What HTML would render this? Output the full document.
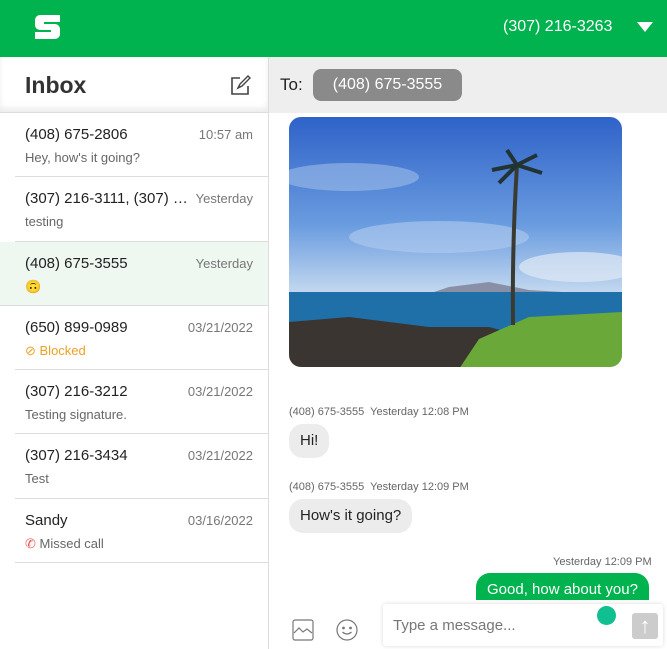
<!DOCTYPE html>
<html><head><meta charset="utf-8"><style>
*{box-sizing:border-box;margin:0;padding:0}
body{width:667px;height:649px;overflow:hidden;font-family:"Liberation Sans",sans-serif;background:#fff;position:relative;color:#222}
.hdr{position:absolute;left:0;top:0;width:667px;height:57px;background:#00b34f}
.logo{position:absolute;left:35px;top:15px;width:25px;height:24px}
.phone{position:absolute;left:503px;top:18px;color:#fff;font-size:16px}
.tri{position:absolute;left:637px;top:22px;width:0;height:0;border-left:8px solid transparent;border-right:8px solid transparent;border-top:10px solid #fff}
.left{position:absolute;left:0;top:57px;width:269px;height:592px;border-right:1px solid #ddd}
.inbox{position:absolute;left:25px;top:15px;font-size:23px;font-weight:bold;color:#333}
.ihd{height:56px;border-bottom:1px solid #ddd;position:relative;box-shadow:0 -4px 6px rgba(0,0,0,.08) inset}
.item{position:relative;height:64.3px;margin-left:15px;border-bottom:1px solid #ddd}
.item.sel{background:#eef7f0;margin-left:0;padding-left:15px}
.n{position:absolute;left:10px;top:13px;font-size:15px;color:#222;width:165px;white-space:nowrap;overflow:hidden;text-overflow:ellipsis}
.sel .n,.sel .s{left:25px}
.d{position:absolute;right:15px;top:14px;font-size:13px;color:#777}
.s{position:absolute;left:10px;top:37px;font-size:13px;color:#666}
.to{position:absolute;left:269px;top:57px;width:398px;height:56px;background:#eee}
.chip{position:absolute;left:44px;top:12px;width:149px;height:32px;border-radius:8px;background:#8a8a8a;color:#fff;font-size:16px;line-height:32px;text-align:center}
.meta{position:absolute;font-size:11px;color:#666}
.b{position:absolute;background:#ececec;border-radius:14px;font-size:15px;color:#222;height:34px;line-height:34px;padding:0 11px}
.g{background:#00b34f;color:#fff}
.inp{position:absolute;left:383px;top:604px;width:280px;height:42px;background:#fff;box-shadow:0 0 4px rgba(0,0,0,.15);border-radius:3px}
</style></head><body>
<div class="hdr"><div class="logo"><svg width="25" height="24"><path d="M5 0h20v7H9v2h11a5 5 0 0 1 5 5v5a5 5 0 0 1-5 5H0v-7h16v-2H5a5 5 0 0 1-5-5V5a5 5 0 0 1 5-5z" fill="#fff"/></svg></div>
<div class="phone">(307) 216-3263</div><div class="tri"></div></div>
<div class="left">
<div class="ihd"><div class="inbox">Inbox</div>
<svg style="position:absolute;left:229px;top:18px" width="22" height="22" viewBox="0 0 22 22" fill="none" stroke="#444" stroke-width="1.6"><path d="M11 3H3v16h16v-8"/><path d="M9 13l2-4 8-8 2 2-8 8z" stroke-width="1.4"/></svg></div>
<div class="item"><div class="n">(408) 675-2806</div><div class="d">10:57 am</div><div class="s">Hey, how's it going?</div></div>
<div class="item"><div class="n">(307) 216-3111, (307) 216</div><div class="d">Yesterday</div><div class="s">testing</div></div>
<div class="item sel"><div class="n">(408) 675-3555</div><div class="d">Yesterday</div><div class="s">🙃</div></div>
<div class="item"><div class="n">(650) 899-0989</div><div class="d">03/21/2022</div><div class="s" style="color:#f0a020">⊘ Blocked</div></div>
<div class="item"><div class="n">(307) 216-3212</div><div class="d">03/21/2022</div><div class="s">Testing signature.</div></div>
<div class="item"><div class="n">(307) 216-3434</div><div class="d">03/21/2022</div><div class="s">Test</div></div>
<div class="item"><div class="n">Sandy</div><div class="d">03/16/2022</div><div class="s"><span style="color:#e55">✆</span> Missed call</div></div>
</div>
<div class="to"><span style="position:absolute;left:11px;top:18px;font-size:17px">To:</span><div class="chip">(408) 675-3555</div></div>
<svg style="position:absolute;left:289px;top:117px" width="333" height="250"><defs><clipPath id="c"><rect width="333" height="250" rx="12"/></clipPath><linearGradient id="sk" x1="0" y1="0" x2="0" y2="1"><stop offset="0" stop-color="#2f62c8"/><stop offset=".6" stop-color="#6a9ce0"/><stop offset="1" stop-color="#c9dcf0"/></linearGradient></defs>
<g clip-path="url(#c)"><rect width="333" height="180" fill="url(#sk)"/>
<ellipse cx="60" cy="60" rx="70" ry="14" fill="#9dbde8" opacity=".6"/><ellipse cx="150" cy="120" rx="90" ry="16" fill="#b0cbee" opacity=".6"/><ellipse cx="290" cy="150" rx="60" ry="15" fill="#e0eaf5" opacity=".7"/>
<path d="M130 180l30-10 40-5 40 8 50 3 43 4z" fill="#8a8fa8"/>
<rect y="175" width="333" height="45" fill="#1f6fa8"/>
<path d="M0 205l60-5 80 10 60 0 30 8 0 40H0z" fill="#3a3530"/>
<path d="M190 222l50-22 93-5v57H170z" fill="#6aa83a"/>
<path d="M228 48q-5 80 -4 160" stroke="#3a3a30" stroke-width="4" fill="none"/>
<path d="M228 48l-25 5M228 48l20-10M228 48l25 8M228 48l-10-15M228 48l-18 18" stroke="#233" stroke-width="4"/>
</g></svg>
<div class="meta" style="left:289px;top:406px">(408) 675-3555&nbsp; Yesterday 12:08 PM</div>
<div class="b" style="left:289px;top:424px">Hi!</div>
<div class="meta" style="left:289px;top:481px">(408) 675-3555&nbsp; Yesterday 12:09 PM</div>
<div class="b" style="left:289px;top:499px">How's it going?</div>
<div class="meta" style="left:553px;top:556px">Yesterday 12:09 PM</div>
<div class="b g" style="left:476px;top:573px;height:30px;border-radius:14px 14px 0 0">Good, how about you?</div>
<div style="position:absolute;left:270px;top:600px;width:397px;height:49px;background:#fff"></div>
<svg style="position:absolute;left:292px;top:619px" width="22" height="22" fill="none" stroke="#777" stroke-width="1.2"><rect x="1" y="1" width="20" height="20" rx="2"/><path d="M2 14l5-5 4 4 4-3 5 4"/></svg>
<svg style="position:absolute;left:336px;top:619px" width="22" height="22" fill="none" stroke="#777" stroke-width="1.2"><circle cx="11" cy="11" r="10"/><circle cx="7.5" cy="9" r=".8" fill="#777"/><circle cx="14.5" cy="9" r=".8" fill="#777"/><path d="M6.5 13q4.5 4 9 0"/></svg>
<div class="inp"><span style="position:absolute;left:10px;top:13px;font-size:15px;color:#777">Type a message...</span>
<div style="position:absolute;left:214px;top:2px;width:19px;height:19px;border-radius:50%;background:#10c090"></div>
<div style="position:absolute;left:249px;top:9px;width:26px;height:26px;background:#ccc;border-radius:3px;color:#fff;font-size:22px;text-align:center;line-height:26px">↑</div></div>
</body></html>
